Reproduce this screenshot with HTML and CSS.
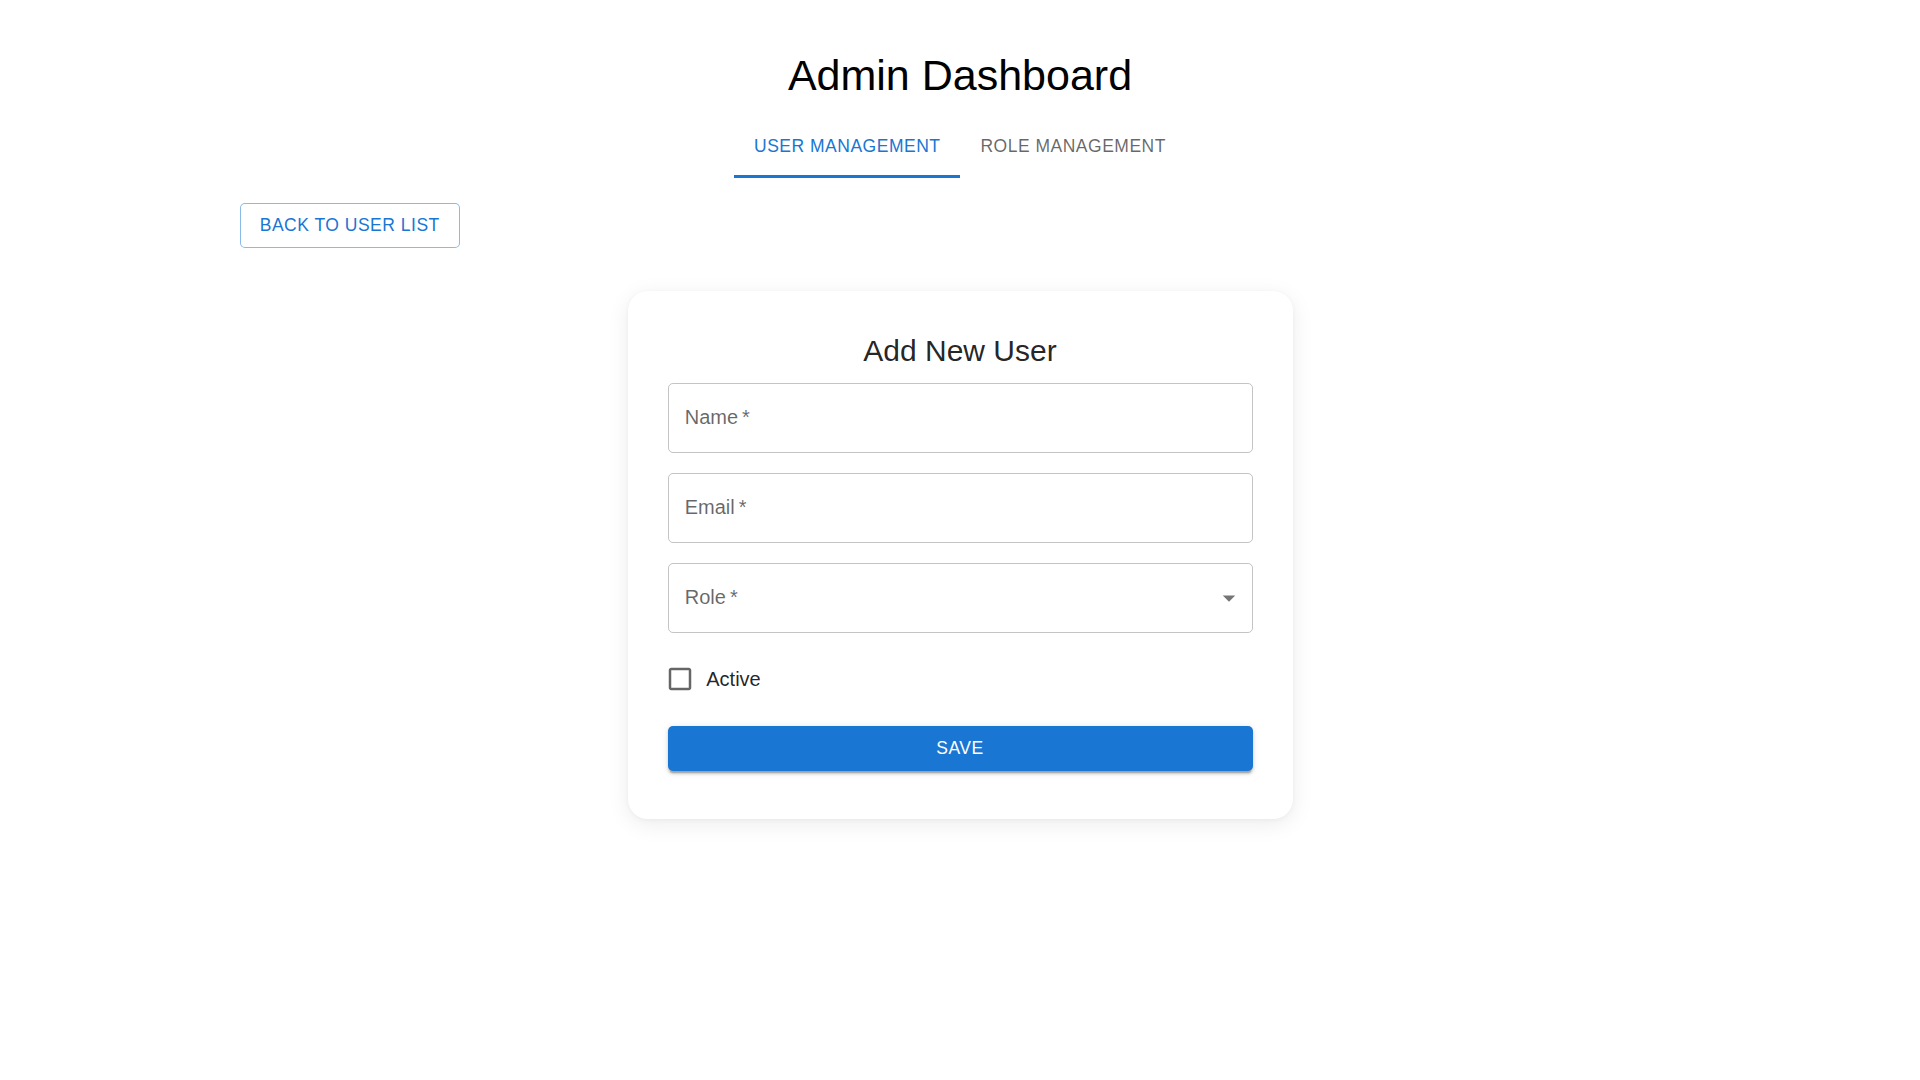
FILE: index.html
```html
<!DOCTYPE html>
<html lang="en">
<head>
<meta charset="utf-8">
<title>Admin Dashboard</title>
<link rel="stylesheet" href="styles.css">
</head>
<body>
<div class="container">
  <h1 class="page-title">Admin Dashboard</h1>
  <div class="tabs">
    <button class="tab tab-selected">User Management</button>
    <button class="tab">Role Management</button>
  </div>
  <div class="toolbar">
    <button class="btn-outlined">Back to User List</button>
  </div>
  <div class="card">
    <h2 class="card-title">Add New User</h2>
    <div class="field"><span class="field-label">Name&thinsp;*</span></div>
    <div class="field"><span class="field-label">Email&thinsp;*</span></div>
    <div class="field field-select">
      <span class="field-label">Role&thinsp;*</span>
      <svg class="select-icon" viewBox="0 0 24 24" width="30" height="30"><path d="M7 10l5 5 5-5z"/></svg>
    </div>
    <label class="check-row">
      <span class="check-box">
        <svg viewBox="0 0 24 24" width="30" height="30"><path d="M19 5v14H5V5h14m0-2H5c-1.11 0-2 .9-2 2v14c0 1.1.89 2 2 2h14c1.1 0 2-.9 2-2V5c0-1.1-.9-2-2-2z"/></svg>
      </span>
      <span class="check-label">Active</span>
    </label>
    <button class="btn-contained">Save</button>
  </div>
</div>
</body>
</html>
```
FILE: styles.css
```css
* { box-sizing: border-box; }
html, body { margin: 0; padding: 0; background: #fff; }
body {
  font-family: "Liberation Sans", Arial, Helvetica, sans-serif;
  color: rgba(0,0,0,0.87);
}
.container {
  max-width: 1500px;
  margin: 0 auto;
  padding: 49px 30px 60px;
}
.page-title {
  margin: 0 0 16px;
  font-size: 43px;
  line-height: 52.5px;
  font-weight: 400;
  text-align: center;
  color: #000;
}
.tabs {
  display: flex;
  justify-content: center;
  height: 60px;
}
.tab {
  position: relative;
  display: flex;
  align-items: center;
  justify-content: center;
  height: 60px;
  padding: 14px 20px 15px;
  border: 0;
  background: none;
  font-family: inherit;
  font-size: 17.5px;
  line-height: 1.25;
  letter-spacing: 0.5px;
  text-transform: uppercase;
  color: rgba(0,0,0,0.6);
  cursor: pointer;
}
.tab-selected { color: #1976d2; }
.tab-selected::after {
  content: "";
  position: absolute;
  left: 0; right: 0; bottom: 0;
  height: 2.5px;
  background: #1976d2;
}
.toolbar {
  margin-top: 25px;
  display: flex;
}
.btn-outlined {
  font-family: inherit;
  font-size: 17.5px;
  line-height: 30.6px;
  letter-spacing: 0.5px;
  text-transform: uppercase;
  color: #1976d2;
  background: #fff;
  border: 1.25px solid rgba(25,118,210,0.5);
  border-radius: 5px;
  padding: 6.25px 18.75px;
  cursor: pointer;
}
.card {
  width: 665px;
  margin: 43px auto 0;
  padding: 40px 40px 48px;
  border-radius: 20px;
  background: #fff;
  box-shadow: 0 5px 22px rgba(0,0,0,0.08), 0 1px 5px rgba(0,0,0,0.04);
}
.card-title {
  margin: 0 0 12px;
  font-size: 30px;
  line-height: 40px;
  font-weight: 400;
  text-align: center;
  color: rgba(0,0,0,0.87);
}
.field {
  position: relative;
  height: 70px;
  border: 1.25px solid rgba(0,0,0,0.23);
  border-radius: 5px;
  margin-bottom: 20px;
  display: flex;
  align-items: center;
  padding: 0 16.25px;
}
.field-label {
  font-size: 20px;
  line-height: 28.75px;
  color: rgba(0,0,0,0.6);
}
.select-icon {
  position: absolute;
  right: 7.5px;
  top: 50%;
  margin-top: -15px;
  fill: rgba(0,0,0,0.54);
}
.check-row {
  display: flex;
  align-items: center;
  margin: 0 0 0 -13.75px;
  height: 52.5px;
  cursor: pointer;
}
.check-box {
  display: flex;
  padding: 11.25px;
}
.check-box svg { fill: rgba(0,0,0,0.6); }
.check-label {
  font-size: 20px;
  line-height: 1.5;
  color: rgba(0,0,0,0.87);
}
.btn-contained {
  display: block;
  width: 100%;
  margin-top: 20.5px;
  height: 45.6px;
  font-family: inherit;
  font-size: 17.5px;
  letter-spacing: 0.5px;
  text-transform: uppercase;
  color: #fff;
  background: #1976d2;
  border: 0;
  border-radius: 5px;
  box-shadow: 0 3.75px 1.25px -2.5px rgba(0,0,0,0.2), 0 2.5px 2.5px 0 rgba(0,0,0,0.14), 0 1.25px 6.25px 0 rgba(0,0,0,0.12);
  cursor: pointer;
}
```
